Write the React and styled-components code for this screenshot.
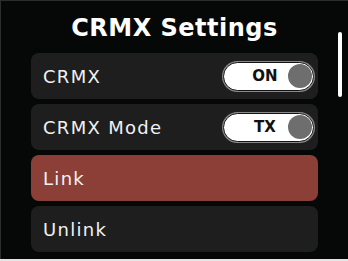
import React from 'react';
import styled, { createGlobalStyle } from 'styled-components';

const GlobalStyle = createGlobalStyle`
  html, body {
    margin: 0;
    padding: 0;
    background: #e6e6e6;
  }
`;

const Screen = styled.div`
  position: relative;
  box-sizing: border-box;
  width: 348px;
  height: 259px;
  background: #050807;
  border-top: 1px solid #2c2e2e;
  border-left: 1px solid #2c2e2e;
  font-family: 'DejaVu Sans', 'Noto Sans', sans-serif;
  color: #f4f4f4;
  overflow: hidden;
`;

const Title = styled.h1`
  margin: 0;
  height: 52px;
  display: flex;
  align-items: center;
  justify-content: center;
  padding-top: 2px;
  box-sizing: border-box;
  font-size: 24px;
  font-weight: 700;
  letter-spacing: 0.5px;
  color: #ffffff;
`;

const List = styled.div`
  display: flex;
  flex-direction: column;
  gap: 5px;
  margin-left: 30px;
  width: 287px;
`;

const Row = styled.div`
  height: 46px;
  box-sizing: border-box;
  display: flex;
  align-items: center;
  justify-content: space-between;
  padding: 1px 4px 0 12px;
  border-radius: 8px;
  background: ${(p) => (p.$active ? '#8c3f37' : '#1e1e1e')};
`;

const Label = styled.span`
  font-size: 18px;
  font-weight: 400;
  letter-spacing: 1.3px;
  color: #f2f2f2;
`;

const Toggle = styled.div`
  position: relative;
  width: 91px;
  height: 29px;
  margin-top: -1px;
  box-sizing: border-box;
  border-radius: 15px;
  background: #ffffff;
  border: 1px solid #121212;
  box-shadow: 0 0 0 1px #8a8a8a;
  display: flex;
  align-items: center;
  padding-left: 18px;
`;

const ToggleText = styled.span`
  width: 46px;
  text-align: center;
  font-size: 15px;
  font-weight: 700;
  color: #111111;
`;

const Knob = styled.span`
  position: absolute;
  right: 1px;
  top: 1.5px;
  width: 24px;
  height: 24px;
  border-radius: 50%;
  background: #6e6e6e;
`;

const Scrollbar = styled.div`
  position: absolute;
  left: 337px;
  top: 31px;
  width: 4px;
  height: 65px;
  border-radius: 2px;
  background: #ffffff;
`;

const items = [
  { label: 'CRMX', toggle: 'ON' },
  { label: 'CRMX Mode', toggle: 'TX' },
  { label: 'Link', active: true },
  { label: 'Unlink' },
];

const App = () => (
  <>
    <GlobalStyle />
    <Screen>
      <Title>CRMX Settings</Title>
      <List>
        {items.map((item) => (
          <Row key={item.label} $active={item.active}>
            <Label>{item.label}</Label>
            {item.toggle && (
              <Toggle>
                <ToggleText>{item.toggle}</ToggleText>
                <Knob />
              </Toggle>
            )}
          </Row>
        ))}
      </List>
      <Scrollbar />
    </Screen>
  </>
);

export default App;
